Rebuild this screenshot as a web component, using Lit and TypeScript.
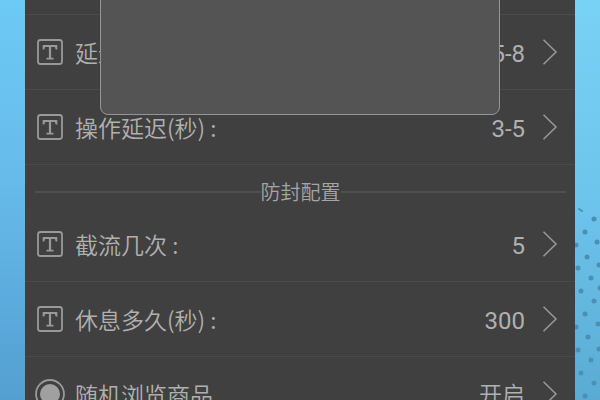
import { LitElement, html, css, svg, nothing } from "lit";
import { customElement, property } from "lit/decorators.js";

const DOTS: [number, number][] = [
  [19, 19], [10, 32], [22, 42], [1, 45], [12, 57], [24, 65], [3, 68], [16, 78], [25, 88],
  [6, 91], [19, 101], [10, 114], [23, 124], [1, 127], [13, 137], [24, 149], [3, 150], [16, 160],
  [6, 173], [19, 183], [10, 196],
];

@customElement("setting-row")
class SettingRow extends LitElement {
  @property() label = "";
  @property() value = "";
  @property() icon = "text";

  static styles = css`
    :host {
      display: block;
      border-bottom: 1px solid #4b4b4b;
    }
    .row {
      box-sizing: border-box;
      display: flex;
      align-items: center;
      width: 100%;
      height: 74px;
      padding: 0 17px 0 10px;
      border: 0;
      background: none;
      color: #b0b0b0;
      font: 350 23px/32px "Noto Sans CJK SC", sans-serif;
      text-align: left;
    }
    .icon {
      flex: none;
      width: 30px;
      height: 30px;
      margin-right: 10px;
    }
    .label {
      flex: 1;
      white-space: nowrap;
    }
    .value {
      font-family: Roboto, "Noto Sans CJK SC", sans-serif;
      font-size: 24px;
      font-weight: 400;
      padding-top: 4px;
    }
    .cjk {
      font-size: 23px;
      font-weight: 350;
    }
    .arrow {
      flex: none;
      width: 16px;
      height: 28px;
      margin-left: 17px;
    }
  `;

  render() {
    const glyph =
      this.icon === "radio"
        ? svg`<circle cx="15" cy="15" r="14" fill="none" stroke="#999" stroke-width="1.8"/>
            <circle cx="15" cy="15" r="10" fill="#a0a0a0"/>`
        : svg`<rect x="3" y="3" width="24" height="24" rx="2.5" fill="none" stroke="#999" stroke-width="1.8"/>
            <path d="M7.700 8H22.300V12.500H20.700L19.900 10H16.100V20.800H18.500V22.400H11.500V20.800H13.900V10H10.100L9.300 12.500H7.700Z" fill="#999"/>`;
    const cjk = /[^\x00-\x7f]/.test(this.value);
    return html`<button class="row" type="button">
      <svg class="icon" viewBox="0 0 30 30" aria-hidden="true">${glyph}</svg>
      <span class="label">${this.label}</span>
      <span class="value ${cjk ? "cjk" : ""}">${this.value || nothing}</span>
      <svg class="arrow" viewBox="0 0 16 28" aria-hidden="true">
        <path d="M1.500 1.800L14 14L1.500 26.200" fill="none" stroke="#999" stroke-width="1.500"/>
      </svg>
    </button>`;
  }
}

@customElement("app-root")
class AppRoot extends LitElement {
  static styles = css`
    :host {
      display: block;
      height: 100vh;
      overflow: hidden;
      position: relative;
      background: linear-gradient(#6dcaf4, #66bbea 45%, #539fd0);
    }
    .side {
      position: absolute;
      top: 0;
      right: 0;
      bottom: 0;
      width: 25px;
      background: linear-gradient(#78d2f5, #6dc4ec 50%, #5aabd4);
    }
    .dots {
      position: absolute;
      top: 200px;
      right: 0;
      width: 25px;
      height: 200px;
    }
    .panel {
      position: relative;
      height: 100%;
      margin: 0 25px;
      overflow: hidden;
      background: #404040;
    }
    .previous {
      height: 14px;
      border-bottom: 1px solid #4b4b4b;
    }
    .section {
      display: flex;
      align-items: center;
      height: 42px;
      padding: 12px 9px 0 10px;
      box-sizing: border-box;
      margin: 0;
      color: #a5a5a5;
      font: 350 20px/28px "Noto Sans CJK SC", sans-serif;
    }
    .section::before,
    .section::after {
      content: "";
      flex: 1;
      height: 2px;
      background: #505050;
    }
    .dialog {
      position: absolute;
      top: -12px;
      left: 100px;
      right: 100px;
      height: 127px;
      box-sizing: border-box;
      border: 1px solid #959595;
      border-radius: 8px;
      background: #545454;
    }
  `;

  render() {
    return html`
      <div class="side"></div>
      <svg class="dots" viewBox="0 0 25 200" aria-hidden="true">
        <path d="M4 9L7 11" stroke="#4a90b4" stroke-width="2" stroke-linecap="round"/>
        ${DOTS.map(([x, y]) => svg`<circle cx=${x} cy=${y} r="2.500" fill="#4a90b4"/>`)}
      </svg>
      <main class="panel">
        <div class="previous"></div>
        <setting-row label="延迟时间(秒) :" value="5-8"></setting-row>
        <setting-row label="操作延迟(秒) :" value="3-5"></setting-row>
        <h2 class="section">防封配置</h2>
        <setting-row label="截流几次 :" value="5"></setting-row>
        <setting-row label="休息多久(秒) :" value="300"></setting-row>
        <setting-row icon="radio" label="随机浏览商品" value="开启"></setting-row>
      </main>
      <div class="dialog" role="dialog" aria-label="弹窗"></div>
    `;
  }
}
